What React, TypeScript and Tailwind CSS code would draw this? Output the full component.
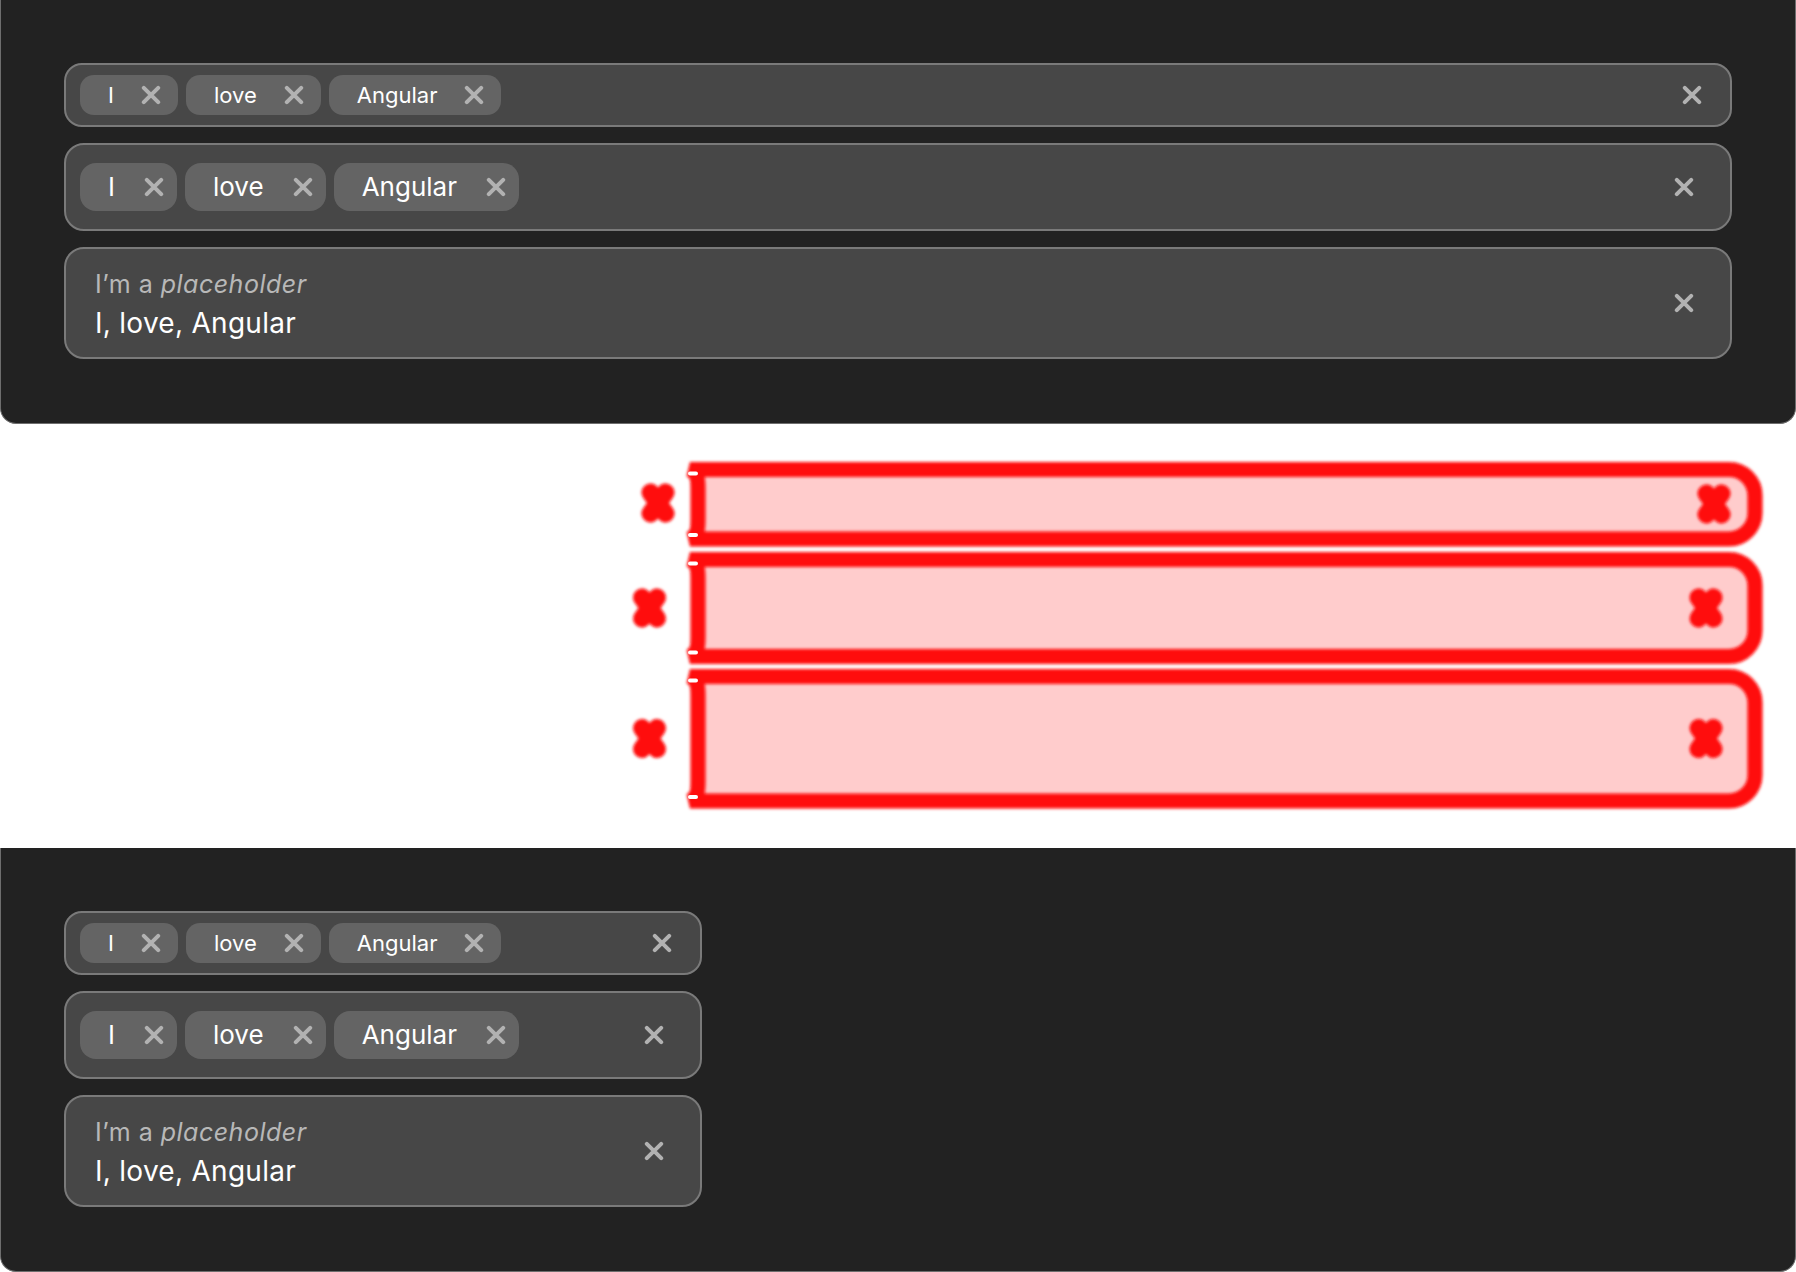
import React from "react";

const XIcon = ({ className = "" }: { className?: string }) => (
  <svg width="20" height="20" viewBox="0 0 20 20" className={className}>
    <path d="M2.8 2.8L17.2 17.2M17.2 2.8L2.8 17.2" stroke="currentColor" strokeWidth="4" strokeLinecap="round" />
  </svg>
);

const ChipS = ({ label }: { label: string }) => (
  <div className="flex h-[40px] items-center rounded-[14px] bg-[#646464] pl-[28px] pr-[17px]">
    <span className="text-[22px] leading-[26px] text-white">{label}</span>
    <XIcon className="ml-[27px] text-[#b2b2b2]" />
  </div>
);

const ChipM = ({ label }: { label: string }) => (
  <div className="flex h-[48px] items-center rounded-[16px] bg-[#646464] pl-[28px] pr-[13px]">
    <span className="text-[26px] leading-[32px] text-white">{label}</span>
    <XIcon className="ml-[29px] text-[#b2b2b2]" />
  </div>
);

const words = ["I", "love", "Angular"];

const Panel = ({ narrow }: { narrow?: boolean }) => {
  const w = narrow ? "w-[638px]" : "w-full";
  return (
    <div className="flex h-[424px] flex-col gap-[16px] rounded-b-[16px] border-x border-b border-[#6e6e6e] bg-[#222222] px-[63px] pt-[63px]">
      <div className={`${w} flex h-[64px] items-center rounded-[18px] border-2 border-[#7a7a7a] bg-[#474747] pl-[14px] pr-[28px]`}>
        <div className="flex gap-[8px]">
          {words.map((t) => (
            <ChipS key={t} label={t} />
          ))}
        </div>
        <div className="flex-1" />
        <XIcon className="text-[#b2b2b2]" />
      </div>
      <div className={`${w} flex h-[88px] items-center rounded-[20px] border-2 border-[#7a7a7a] bg-[#474747] pl-[14px] pr-[36px]`}>
        <div className="flex gap-[8px]">
          {words.map((t) => (
            <ChipM key={t} label={t} />
          ))}
        </div>
        <div className="flex-1" />
        <XIcon className="text-[#b2b2b2]" />
      </div>
      <div className={`${w} flex h-[112px] items-center rounded-[20px] border-2 border-[#7a7a7a] bg-[#474747] pl-[29px] pr-[36px]`}>
        <div className="flex flex-col pt-[2px]">
          <span className="text-[25px] leading-[28px] tracking-[0.02em] text-[#b8b8b8]">
            I’m a <i>placeholder</i>
          </span>
          <span className="mt-[9px] text-[28px] leading-[32px] tracking-[0.01em] text-white">I, love, Angular</span>
        </div>
        <div className="flex-1" />
        <XIcon className="text-[#b2b2b2]" />
      </div>
    </div>
  );
};

const boxes = [
  { T: 45.5, B: 115, l: [658, 79], r: [1714, 80] },
  { T: 135.5, B: 232.5, l: [649.5, 184], r: [1706, 184] },
  { T: 252.5, B: 377, l: [649.5, 314.5], r: [1706, 314.5] },
];

const boxPath = (T: number, B: number) => {
  const L = 690,
    M = 698,
    R = 1755,
    r = 26;
  return `M ${L} ${T} H ${R - r} A ${r} ${r} 0 0 1 ${R} ${T + r} V ${B - r} A ${r} ${r} 0 0 1 ${R - r} ${B} H ${L} C ${M} ${B - 4} ${M} ${B - 10} ${M} ${B - 20} V ${T + 20} C ${M} ${T + 10} ${M} ${T + 4} ${L} ${T} Z`;
};

const blob = (cx: number, cy: number) =>
  `M ${cx - 7.5} ${cy - 10.5} L ${cx + 7.5} ${cy + 10.5} M ${cx + 7.5} ${cy - 10.5} L ${cx - 7.5} ${cy + 10.5}`;

const Diff = () => (
  <div className="h-[424px] bg-white">
    <svg width="1796" height="424" viewBox="0 0 1796 424" className="block">
      <defs>
        <filter id="soft" x="-5%" y="-20%" width="110%" height="140%">
          <feGaussianBlur stdDeviation="1.5" />
        </filter>
      </defs>
      {boxes.map((b, i) => (
        <path key={i} d={boxPath(b.T, b.B)} fill="#ffcccc" />
      ))}
      <g filter="url(#soft)">
        {boxes.map((b, i) => (
          <path key={i} d={boxPath(b.T, b.B)} fill="none" stroke="#ff0a0a" strokeWidth={15} />
        ))}
        {boxes.map((b, i) => (
          <g key={"b" + i} stroke="#ff0a0a" strokeWidth={18} strokeLinecap="round">
            <path d={blob(b.l[0], b.l[1])} />
            <path d={blob(b.r[0], b.r[1])} />
          </g>
        ))}
      </g>
      {boxes.map((b, i) => (
        <g key={"m" + i} fill="#ffffff">
          <rect x={688} y={b.T + 2} width={10} height={4} rx={2} />
          <rect x={688} y={b.B - 6} width={10} height={4} rx={2} />
        </g>
      ))}
    </svg>
  </div>
);

export default function App() {
  return (
    <div className="flex h-[1272px] w-[1796px] flex-col overflow-hidden bg-white font-['Inter',sans-serif]">
      <Panel />
      <Diff />
      <Panel narrow />
    </div>
  );
}
